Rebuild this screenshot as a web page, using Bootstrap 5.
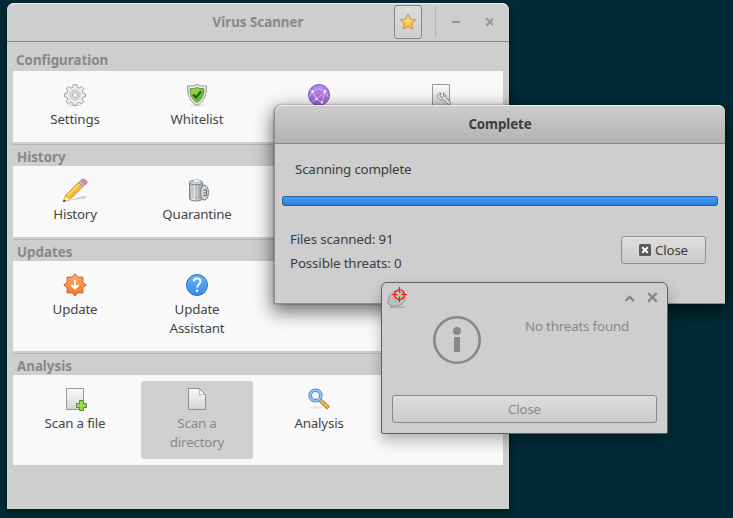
<!DOCTYPE html>
<html lang="en">
<head>
<meta charset="utf-8">
<meta name="viewport" content="width=device-width, initial-scale=1">
<title>Virus Scanner</title>
<link href="https://cdn.jsdelivr.net/npm/bootstrap@5.3.0/dist/css/bootstrap.min.css" rel="stylesheet">
<style>
body{background:#002b36;font-family:"Noto Sans",sans-serif;font-size:13.33px;line-height:19px;letter-spacing:-.18px;color:#3c3c3c;width:733px;height:518px;overflow:hidden}
svg{display:block;flex:none}
.win{background:#cecece}
.win-main{left:7px;top:3px;width:502px;height:506px;border-radius:7px 7px 0 0;box-shadow:0 3px 9px rgba(0,0,0,.5)}
.win-scan{left:274px;top:105px;width:451px;height:199px;border-radius:7px 7px 0 0;border-left:1px solid #8c8c8c;border-bottom:1px solid #8c8c8c;box-shadow:0 6px 18px 2px rgba(0,0,0,.55),0 0 2px rgba(0,0,0,.5)}
.win-note{left:381px;top:282px;width:287px;height:152px;border:1px solid #5f5f5f;border-radius:6px 6px 2px 2px;box-shadow:0 7px 14px rgba(0,0,0,.28)}
.bar{height:39px;border-bottom:1px solid #868686;border-radius:7px 7px 0 0;box-shadow:inset 0 1px #efefef;letter-spacing:0}
.bar-main{color:#888}
.bar-scan{background:linear-gradient(#cdcdcd,#b3b3b3);letter-spacing:-.1px}
.star-btn{width:28px;height:34px;border:1px solid #858585;border-radius:3px;background:linear-gradient(#dcdcdc,#cfcfcf)}
.divide{width:1px;height:32px;background:#b5b5b5;margin-left:13px}
.sections{padding:0 6px}
.heading{height:29px;color:#888;font-weight:700;letter-spacing:0;padding:9px 0 0 3px}
.heading-line{height:22px;border-top:1px solid #b5b5b5;padding:3px 0 0 4px}
.tiles{background:#f9f9f9;padding:6px;gap:10px;margin-bottom:2px}
.tile{width:112px;padding:6px 10px 0;border-radius:3px;color:#464646}
.tile svg{margin-bottom:3px}
.tiles-short{height:71px}
.tiles-tall{height:90px}
.tile.picked{background:#d0d0d0;color:#888}
.scan-body{padding:16px 7px 0}
.scan-label{padding-left:13px}
.progress.full{height:10px;margin-top:17px;border-radius:3px;background:#777}
.full .progress-bar{border:1px solid #22609f;border-radius:3px;background:linear-gradient(#479bef,#277fdf)}
.scan-foot{padding-top:21px}
.counts{line-height:24px;padding-left:8px;letter-spacing:-.14px}
.push{height:28px;border:1px solid #8d8d8d;border-radius:3px;background:linear-gradient(#dedede,#cbcbcb);color:inherit;font-size:inherit;line-height:19px;letter-spacing:inherit;padding:0}
.push-scan{width:85px;margin:9px 12px 0 0;box-shadow:inset 0 1px #e6e6e6}
.push-note{border-color:#888;margin:auto 10px 10px}
.note-text{color:#888}
.note-msg{padding-top:6px;padding-left:3px}
</style>
</head>
<body class="position-relative">
<svg width="0" height="0" class="position-absolute" aria-hidden="true"><defs>
<linearGradient id="paper" x2="0" y2="1"><stop stop-color="#fafafa"/><stop offset="1" stop-color="#d5d5d5"/></linearGradient>
<linearGradient id="green" x2="1" y2="1"><stop stop-color="#a5dc65"/><stop offset="1" stop-color="#58ad24"/></linearGradient>
<linearGradient id="purple" x2="0" y2="1"><stop stop-color="#b98be8"/><stop offset="1" stop-color="#9c66d6"/></linearGradient>
<linearGradient id="orange" x2="0" y2="1"><stop stop-color="#ffad67"/><stop offset="1" stop-color="#f4762d"/></linearGradient>
<linearGradient id="blue" x2="0" y2="1"><stop stop-color="#65b7fa"/><stop offset="1" stop-color="#368bea"/></linearGradient>
<linearGradient id="gold" x2="0" y2="1"><stop stop-color="#ffeb91"/><stop offset="1" stop-color="#f8b92f"/></linearGradient>
<linearGradient id="metal"><stop stop-color="#a2a6aa"/><stop offset=".3" stop-color="#f4f4f4"/><stop offset=".6" stop-color="#c8cbce"/><stop offset="1" stop-color="#a2a6aa"/></linearGradient>
</defs></svg>

<main class="win win-main position-absolute">
 <header class="bar bar-main d-flex align-items-center position-relative">
  <div class="fw-bold w-100 text-center">Virus Scanner</div>
  <div class="position-absolute end-0 d-flex align-items-center pe-3">
   <div class="star-btn d-flex align-items-center justify-content-center"><svg width="18" height="18" viewBox="0 0 18 18"><path d="M9 1.300l2.300 5 5.400.5-4.100 3.700 1.300 5.700L9 13.400l-4.900 2.800 1.300-5.700-4.100-3.700 5.400-.5z" fill="url(#gold)" stroke="#d58b37" stroke-linejoin="round"/></svg></div>
   <div class="divide"></div>
   <svg width="57" height="14" viewBox="0 0 57 14" stroke="#959595" fill="none"><path d="M16 7h8" stroke-width="2"/><path d="M50.500 3.200l7.500 7.500m0-7.500l-7.500 7.500" stroke-width="2" transform="translate(-.2)"/></svg>
  </div>
 </header>
 <div class="sections">
  <div class="heading">Configuration</div>
  <section class="tiles tiles-short d-flex">
   <div class="tile d-flex flex-column align-items-center text-center"><svg width="24" height="24" viewBox="0 0 24 24"><ellipse cx="12" cy="22.300" rx="7" ry="1" fill="#ddd"/><path d="M10.400 1.500h3.200l.7 2.800 1.800.8 2.500-1.500 2.100 2.100-1.500 2.500.7 1.800 2.600.6v3.100l-2.700.7-.7 1.800 1.500 2.500-2.100 2.100-2.500-1.500-1.800.8-.7 2.500h-3.100l-.7-2.500-1.800-.8-2.500 1.500-2.200-2.100 1.600-2.500-.7-1.800-2.600-.7v-3.100l2.600-.6.7-1.800-1.600-2.500 2.200-2.100 2.500 1.500 1.800-.8z" fill="#ececec" stroke="#a2a2a2"/><circle cx="12" cy="12" r="5" fill="#dedede" stroke="#bdbdbd"/><circle cx="12" cy="12" r="2.500" fill="#fafafa" stroke="#aaa"/></svg>Settings</div>
   <div class="tile d-flex flex-column align-items-center text-center"><svg width="24" height="24" viewBox="0 0 24 24"><ellipse cx="12" cy="22.300" rx="7" ry="1" fill="#ddd"/><path d="M12 1.500c3 1.700 6.200 1.500 9.500 1.500 0 8-1.500 15-9.500 19.300C4 18 2.500 11 2.500 3c3.300 0 6.500.2 9.500-1.500z" fill="#eee" stroke="#929292"/><path d="M12 4.500c2.300 1.100 4.500 1.200 7 1.200-.2 6-1.700 10.800-7 13.800-5.300-3-6.800-7.800-7-13.800 2.500 0 4.700-.1 7-1.200z" fill="url(#green)" stroke="#539c28"/><path d="M8 11.500l3 3 5-6" fill="none" stroke="#1c591c" stroke-width="2"/></svg>Whitelist</div>
   <div class="tile d-flex flex-column align-items-center text-center"><svg width="24" height="24" viewBox="0 0 24 24"><circle cx="12" cy="12" r="10.500" fill="url(#purple)" stroke="#8650b9"/><g stroke="#e2caff" stroke-width=".8" fill="none"><path d="M5.500 8.500Q12 3.500 18 8.500L9.500 16zM5.500 8.500L9.500 16 15 19.500 18 8.500M5.500 8.500L2.500 13.500M18 8.500L21.500 14M9.500 16L5 19"/></g><g fill="#fff"><circle cx="5.500" cy="8.500" r="1.200"/><circle cx="18" cy="8.500" r="1.200"/><circle cx="9.500" cy="16" r="1.200"/><circle cx="15" cy="19.500" r="1.200"/></g></svg></div>
   <div class="tile d-flex flex-column align-items-center text-center"><svg width="24" height="24" viewBox="0 0 24 24"><path d="M3.500 1.500h17v21h-17z" fill="url(#paper)" stroke="#999"/><path d="M12 10c-3-.5-4.500 3-2.700 5.300 1.300 1.600 3 1.800 4.700 1.200l5.500 5.500 2.500-2.500-5.500-5.200c.5-2-.3-3.500-2-4.300l.3 3.500-2 1.200-2-1.700z" fill="#eee" stroke="#8b8b8b"/></svg></div>
  </section>
  <div class="heading heading-line">History</div>
  <section class="tiles tiles-short d-flex">
   <div class="tile d-flex flex-column align-items-center text-center"><svg width="26" height="24" viewBox="0 0 26 24"><path d="M4 23l18-5c4-.3 3 2-1 2.500z" fill="#bbb" opacity=".75"/><path d="M3 18L16.500 4.500l4.500 4L8 21.500 1.300 24z" fill="#f5bd36" stroke="#b77a20" stroke-width=".8"/><path d="M6 17L18 5.500" stroke="#ffdc71" stroke-width="1.500"/><path d="M3 18l5 3.500-6.500 2.300z" fill="#fce7b8"/><path d="M2 21.500l2 1.400-3 1z" fill="#333"/><path d="M16.500 4.500l2.500-2.300 4.300 4L21 8.500z" fill="#bbb" stroke="#888" stroke-width=".7"/><path d="M19 2.200C21-.5 27 3 24.500 5.500l-1.200 1z" fill="#f087ac" stroke="#c45079" stroke-width=".8"/></svg>History</div>
   <div class="tile d-flex flex-column align-items-center text-center"><svg width="24" height="24" viewBox="0 0 24 24"><path d="M4.500 5v16c1 2.500 12 2.500 13 0V5z" fill="url(#metal)" stroke="#7c8084"/><path d="M8 7v14m3-14v15m3-15v14" stroke="#94989c" stroke-width=".8"/><ellipse cx="11" cy="4.500" rx="6.700" ry="2.300" fill="#c7d7de" stroke="#73797e"/><path d="M7 4l3-3 4 .5 2 3z" fill="#e8f3f7" stroke="#9fb1b9" stroke-width=".6"/><ellipse cx="19.500" cy="14.500" rx="4" ry="7.500" fill="#d3d5d7" stroke="#777b80"/><path d="M18.500 12h3v5.500h-3m0-2.700h2" stroke="#606468" fill="none"/></svg>Quarantine</div>
  </section>
  <div class="heading heading-line">Updates</div>
  <section class="tiles tiles-tall d-flex">
   <div class="tile d-flex flex-column align-items-center text-center"><svg width="24" height="24" viewBox="0 0 24 24"><path d="M12 .8l2.600 3.300h5.300v5.300l3.300 2.600-3.300 2.600v5.300h-5.300L12 23.200l-2.600-3.300H4.100v-5.300L.8 12l3.300-2.600V4.100h5.300z" fill="url(#orange)" stroke="#cc622a"/><path d="M12 7v8.500m-3.700-3.500l3.700 3.700 3.700-3.700" fill="none" stroke="#fff" stroke-width="2"/></svg>Update</div>
   <div class="tile d-flex flex-column align-items-center text-center"><svg width="24" height="24" viewBox="0 0 24 24"><circle cx="12" cy="12" r="10.500" fill="url(#blue)" stroke="#2e6ab5"/><path d="M8.800 8.500c0-4 6.700-4 6.700-.2 0 2.500-3.300 3-3.300 6.200" fill="none" stroke="#fff" stroke-width="2"/><circle cx="12.100" cy="17.700" r="1.300" fill="#fff"/></svg>Update Assistant</div>
  </section>
  <div class="heading heading-line">Analysis</div>
  <section class="tiles tiles-tall d-flex">
   <div class="tile d-flex flex-column align-items-center text-center"><svg width="24" height="24" viewBox="0 0 24 24"><path d="M3.500 1.500h17v21h-17z" fill="url(#paper)" stroke="#999"/><path d="M16.500 13.500h4v3h3v4h-3v3h-4v-3h-3v-4h3z" fill="#9ada4f" stroke="#4b9627"/></svg>Scan a file</div>
   <div class="tile picked d-flex flex-column align-items-center text-center"><svg width="24" height="24" viewBox="0 0 24 24"><path d="M3.500 1.500h11l6 6v15h-17z" fill="url(#paper)" stroke="#8e8e8e"/><path d="M13.500 1.500c1.500 2 .8 4 .8 6.500 2-.8 4.200-1 6.200-.3z" fill="#fff" stroke="#999" stroke-width=".7"/></svg>Scan a directory</div>
   <div class="tile d-flex flex-column align-items-center text-center"><svg width="24" height="24" viewBox="0 0 24 24"><ellipse cx="9" cy="20.500" rx="7" ry="1.500" fill="#e8e8e8"/><path d="M13.500 13.500l8 7.500" stroke="#a7722a" stroke-width="4.200"/><path d="M13.500 13.500l7.700 7.200" stroke="#e8b65f" stroke-width="2.500"/><circle cx="8.500" cy="8.500" r="5.300" fill="#f8fcff" stroke="#3e7cc4" stroke-width="3.600"/><circle cx="8.500" cy="8.500" r="5.300" fill="none" stroke="#96cafb" stroke-width="1.800"/></svg>Analysis</div>
  </section>
 </div>
</main>

<section class="win win-scan position-absolute">
 <header class="bar bar-scan d-flex align-items-center justify-content-center fw-bold">Complete</header>
 <div class="scan-body">
  <div class="scan-label">Scanning complete</div>
  <div class="progress full"><div class="progress-bar w-100"></div></div>
  <div class="scan-foot d-flex justify-content-between align-items-start">
   <div class="counts">Files scanned: 91<br>Possible threats: 0</div>
   <button class="btn push push-scan d-flex align-items-center justify-content-center"><svg class="me-1" width="12" height="12" viewBox="0 0 12 12"><rect width="12" height="12" rx="1.500" fill="#5b5b5b"/><path d="M3.200 3.200l5.600 5.600m0-5.600L3.200 8.800" stroke="#fff" stroke-width="2"/></svg>Close</button>
  </div>
 </div>
</section>

<section class="win win-note position-absolute d-flex flex-column">
 <div class="d-flex justify-content-between">
  <svg width="30" height="28" viewBox="0 0 30 28"><ellipse cx="15" cy="24.300" rx="9" ry=".8" fill="#aaa"/><path d="M6.500 18c.3-6.500 4-10.500 9.500-10 6 .5 9 7 5.500 11.500-2.500 3.300-8 3.300-10.500 3.500l-1 1.300-.8-1.600-4.200-3z" fill="#bcc0b5" stroke="#858780" stroke-width=".8"/><g stroke="#f11" stroke-width="1.200" fill="none"><circle cx="17.500" cy="11.500" r="5"/><path d="M17.500 4v5.500m0 4V19M10 11.500h5.500m4 0H25"/></g></svg>
  <svg width="50" height="28" viewBox="0 0 50 28" stroke="#858585" stroke-width="2.300" fill="none"><path d="M8.500 18l4.200-4.200 4.200 4.200M31.200 10l8.600 8.600m0-8.600l-8.600 8.600"/></svg>
 </div>
 <div class="d-flex">
  <svg class="ms-5" width="54" height="60" viewBox="0 0 54 60"><circle cx="27" cy="29" r="22.700" fill="none" stroke="#888" stroke-width="2.600"/><circle cx="27" cy="20" r="4" fill="#888"/><path d="M24 26h6v15h-6z" fill="#888"/></svg>
  <div class="note-text note-msg flex-grow-1 text-center">No threats found</div>
 </div>
 <button class="btn push push-note note-text">Close</button>
</section>
<script src="https://cdn.jsdelivr.net/npm/bootstrap@5.3.0/dist/js/bootstrap.bundle.min.js"></script>
</body>
</html>
